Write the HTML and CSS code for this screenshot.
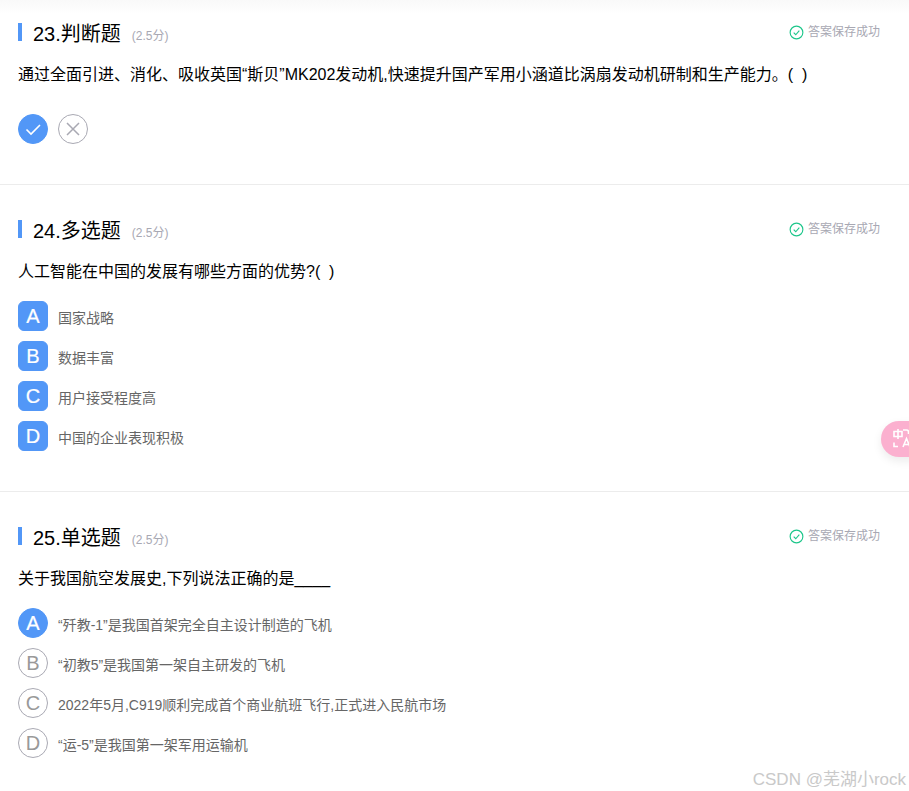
FILE: index.html
```html
<!DOCTYPE html>
<html lang="zh-CN">
<head>
  <meta charset="UTF-8" />
  <title>答题</title>
  <link rel="stylesheet" href="styles.css">
</head>
<body>
  <!-- 23 判断题 -->
  <div class="question first">
    <div class="q-head">
      <div class="q-title"><span class="q-name">23.判断题</span><span class="q-score">(2.5分)</span></div>
      <div class="saved">
        <svg class="saved-icon" viewBox="0 0 16 16"><circle cx="8" cy="8" r="6.8"/><path d="M5 8.2l2.2 2.2L11 6"/></svg>
        <span>答案保存成功</span>
      </div>
    </div>
    <div class="q-text">通过全面引进、消化、吸收英国“斯贝”MK202发动机,快速提升国产军用小涵道比涡扇发动机研制和生产能力。( &nbsp;)</div>
    <div class="judge">
      <span class="judge-btn on"><svg viewBox="0 0 28 28"><path d="M7.500 14.500l4.500 4.500L21 10"/></svg></span>
      <span class="judge-btn"><svg viewBox="0 0 28 28"><path d="M8 8l12 12M20 8L8 20"/></svg></span>
    </div>
  </div>

  <!-- 24 多选题 -->
  <div class="question second">
    <div class="q-head">
      <div class="q-title"><span class="q-name">24.多选题</span><span class="q-score">(2.5分)</span></div>
      <div class="saved">
        <svg class="saved-icon" viewBox="0 0 16 16"><circle cx="8" cy="8" r="6.8"/><path d="M5 8.2l2.2 2.2L11 6"/></svg>
        <span>答案保存成功</span>
      </div>
    </div>
    <div class="q-text">人工智能在中国的发展有哪些方面的优势?( &nbsp;)</div>
    <div class="options">
      <div class="option"><span class="mark square on">A</span><span class="opt-text">国家战略</span></div>
      <div class="option"><span class="mark square on">B</span><span class="opt-text">数据丰富</span></div>
      <div class="option"><span class="mark square on">C</span><span class="opt-text">用户接受程度高</span></div>
      <div class="option"><span class="mark square on">D</span><span class="opt-text">中国的企业表现积极</span></div>
    </div>
  </div>

  <!-- 25 单选题 -->
  <div class="question">
    <div class="q-head">
      <div class="q-title"><span class="q-name">25.单选题</span><span class="q-score">(2.5分)</span></div>
      <div class="saved">
        <svg class="saved-icon" viewBox="0 0 16 16"><circle cx="8" cy="8" r="6.8"/><path d="M5 8.2l2.2 2.2L11 6"/></svg>
        <span>答案保存成功</span>
      </div>
    </div>
    <div class="q-text">关于我国航空发展史,下列说法正确的是____</div>
    <div class="options">
      <div class="option"><span class="mark on">A</span><span class="opt-text">“歼教-1”是我国首架完全自主设计制造的飞机</span></div>
      <div class="option"><span class="mark">B</span><span class="opt-text">“初教5”是我国第一架自主研发的飞机</span></div>
      <div class="option"><span class="mark">C</span><span class="opt-text">2022年5月,C919顺利完成首个商业航班飞行,正式进入民航市场</span></div>
      <div class="option"><span class="mark">D</span><span class="opt-text">“运-5”是我国第一架军用运输机</span></div>
    </div>
  </div>

  <!-- 翻译悬浮按钮 -->
  <div class="float-btn">
    <svg viewBox="0 0 28 36"><path d="M13 10.500H21V15.500H13ZM17 8V18M13 21.500V25.500H17M22 9H25.500C26.500 9 27.500 10 27.500 11V13M22 26L25.500 17.500L29 26M23.200 23.500H28"/></svg>
  </div>
  <div class="watermark">CSDN @芜湖小rock</div>
</body>
</html>
```

FILE: styles.css
```css
body {
  margin: 0;
  height: 791px;
  overflow: hidden;
  position: relative;
  background: linear-gradient(#f9f9f9, #fff 14px);
  color: #000;
  font-family: "Liberation Sans", "Noto Sans CJK SC", sans-serif;
}
.question {
  padding: 35px 18px 0 18px;
  border-top: 1px solid #ececec;
}
.question.first {
  padding-top: 23px;
  height: 161px;
  border-top: none;
}
.question.second {
  height: 271px;
}
.q-head {
  display: flex;
  justify-content: space-between;
  align-items: flex-start;
  height: 18px;
}
.q-title {
  display: flex;
  align-items: center;
  height: 18px;
  border-left: 4px solid #5297f7;
  padding-left: 11px;
}
.q-name {
  font-size: 20px;
  line-height: 20px;
  padding-top: 3px;
}
.q-score {
  margin-left: 11px;
  margin-top: 5px;
  font-size: 12px;
  color: #a8a8b3;
}
.saved {
  display: flex;
  align-items: center;
  gap: 4px;
  margin-right: 11px;
  font-size: 12px;
  line-height: 18px;
  color: #a8a8b3;
}
.saved-icon {
  width: 15px;
  height: 15px;
  fill: none;
  stroke: #1cc68a;
  stroke-width: 1.2;
}
.q-text {
  margin-top: 22px;
  font-size: 16px;
  line-height: 24px;
}
.judge {
  display: flex;
  gap: 10px;
  margin-top: 27px;
}
.judge-btn {
  width: 30px;
  height: 30px;
  box-sizing: border-box;
  border: 1px solid #a9a9b3;
  border-radius: 50%;
}
.judge-btn svg {
  display: block;
  width: 28px;
  height: 28px;
  fill: none;
  stroke: #a9a9b3;
  stroke-width: 1.5;
}
.judge-btn.on {
  background: #5297f7;
  border-color: #5297f7;
}
.judge-btn.on svg {
  stroke: #fff;
  stroke-width: 1.6;
}
.options {
  display: flex;
  flex-direction: column;
  gap: 10px;
  margin-top: 17px;
}
.option {
  display: flex;
  align-items: center;
  gap: 10px;
  height: 30px;
}
.mark {
  width: 30px;
  height: 30px;
  box-sizing: border-box;
  display: flex;
  align-items: center;
  justify-content: center;
  border: 1px solid #a9a9b3;
  border-radius: 50%;
  font-size: 20px;
  line-height: 26px;
  color: #999;
}
.mark.square {
  border-radius: 6px;
}
.mark.on {
  background: #5297f7;
  border-color: #5297f7;
  color: #fff;
  -webkit-text-stroke: 0.2px #fff;
}
.opt-text {
  font-size: 14px;
  color: #666;
  padding-top: 2px;
}
.float-btn {
  position: absolute;
  top: 421px;
  left: 881px;
  width: 50px;
  height: 36px;
  border-radius: 18px;
  background: #fbb0cf;
  box-shadow: 0 4px 10px rgba(0, 0, 0, 0.08);
}
.float-btn svg {
  display: block;
  width: 28px;
  height: 36px;
  fill: none;
  stroke: #fff;
  stroke-width: 1.6;
}
.watermark {
  position: absolute;
  right: 3px;
  top: 765px;
  font-size: 17px;
  color: #c9c9c9;
  white-space: nowrap;
}
```
